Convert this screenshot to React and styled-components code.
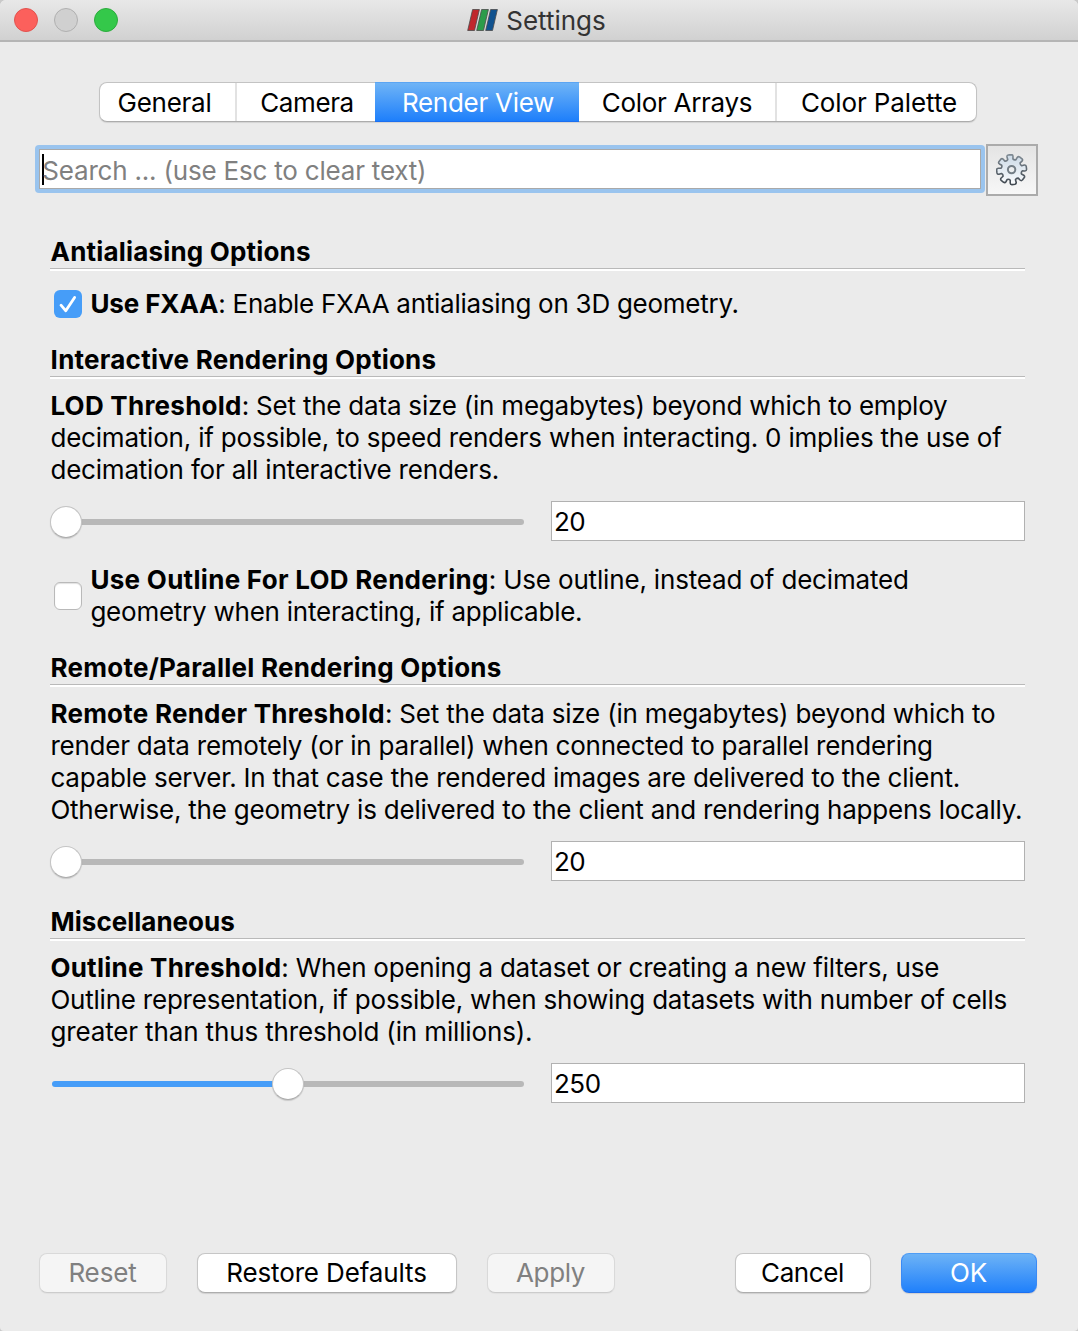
import React from "react";
import styled, { createGlobalStyle, css } from "styled-components";

const Global = createGlobalStyle`
  html, body { margin: 0; background: #c9c9c9; }
  * { box-sizing: border-box; }
`;

const Window = styled.div`
  width: 1078px;
  height: 1331px;
  display: flex;
  flex-direction: column;
  overflow: hidden;
  background: #ebebeb;
  border-radius: 6px 6px 4px 4px;
  color: #000;
  font: 400 26px/32px Inter, "Liberation Sans", sans-serif;
`;

const TitleBar = styled.header`
  flex: none;
  height: 42px;
  display: grid;
  grid-template-columns: 1fr auto 1fr;
  align-items: center;
  padding: 0 14px 2px;
  background: linear-gradient(#e8e8e8, #d1d1d1 40px);
  border-bottom: 2px solid #b5b5b5;
`;

const Lights = styled.div`
  display: flex;
  gap: 16px;
  padding-top: 2px;
`;

const Light = styled.span`
  width: 24px;
  height: 24px;
  border-radius: 50%;
  background: ${(p) => p.$fill};
  border: 1px solid ${(p) => p.$edge};
`;

const Title = styled.div`
  display: flex;
  align-items: center;
  gap: 8px;
  padding: 3px 5px 0 0;
  color: #333;
  white-space: nowrap;
`;

const Tracked = styled.span`
  letter-spacing: ${(p) => p.$track || 0}px;
  font-weight: ${(p) => (p.$bold ? 700 : 400)};
  white-space: pre;
`;

const Tabs = styled.nav`
  flex: none;
  display: flex;
  width: 878px;
  height: 40px;
  margin: 40px 0 0 99px;
  border: 1px solid #c3c3c3;
  border-bottom-color: #acacac;
  border-radius: 8px;
  background: #fff;
  box-shadow: 0 1px 1px rgba(0, 0, 0, 0.1);
`;

const Tab = styled.div`
  width: ${(p) => p.$width}px;
  display: flex;
  justify-content: center;
  line-height: 40px;
  border-right: ${(p) => (p.$divider ? "2px solid #e2e2e2" : "0")};
  padding: 0 ${(p) => p.$right || 0}px 0 ${(p) => p.$left || 0}px;
  ${(p) =>
    p.$active &&
    css`
      margin: -1px 0;
      color: #fff;
      background: linear-gradient(#6fb4f6, #1e7ffb);
      border-top: 1px solid #5ba5f3;
      border-bottom: 1px solid #1c6ff0;
    `}
`;

const SearchRow = styled.div`
  flex: none;
  display: flex;
  align-items: center;
  gap: 1px;
  height: 52px;
  margin: 22px 0 0 35px;
`;

const SearchBox = styled.div`
  width: 950px;
  height: 48px;
  margin-top: -2px;
  padding: 4px;
  border-radius: 4px;
  background: #9ac4ee;
`;

const SearchField = styled.div`
  display: flex;
  align-items: center;
  height: 40px;
  padding-left: 2px;
  border: 1px solid #a9a9a9;
  background: #fff;
  color: #808080;
`;

const Placeholder = styled.span`
  display: flex;
  padding-top: 4px;
  margin-left: -1.7px;
`;

const Caret = styled.span`
  width: 2px;
  height: 31px;
  background: #000;
`;

const GearButton = styled.div`
  width: 52px;
  height: 52px;
  display: flex;
  align-items: center;
  justify-content: center;
  border: 2px solid #ababab;
  background: linear-gradient(#e4e4e4, #f7f7f7);
`;

const Content = styled.main`
  flex: 1;
  display: flex;
  flex-direction: column;
  margin: 40px 53px 0 51px;
`;

const Heading = styled.h2`
  margin: 0 0 ${(p) => p.$after || 11}px -1px;
  padding-left: 0.6px;
  height: 35px;
  font-size: 26px;
  line-height: 32px;
  border-bottom: 2px solid #fff;
  box-shadow: inset 0 -1px 0 #b9b9b9;
`;

const Paragraph = styled.div`
  display: flex;
  flex-direction: column;
  margin-left: -0.6px;
`;

const Line = styled.div`
  height: 32px;
  white-space: nowrap;
`;

const CheckRow = styled.div`
  display: flex;
  align-items: center;
  gap: 9px;
  margin-bottom: 24px;
  padding-left: 3px;
`;

const Box = styled.span`
  width: 28px;
  height: 28px;
  flex: none;
  display: flex;
  align-items: center;
  justify-content: center;
  border-radius: 6px;
  border: ${(p) => (p.$on ? "0" : "1px solid #b9b9b9")};
  background: ${(p) => (p.$on ? "#469df8" : "#fff")};
  box-shadow: ${(p) => (p.$on ? "none" : "inset 0 1px 1px rgba(0,0,0,.12)")};
`;

const SliderRow = styled.div`
  display: grid;
  grid-template-columns: 474px 474px;
  column-gap: 26px;
  align-items: center;
  margin: 15px 0 ${(p) => p.$after}px;
`;

const Slider = styled.div`
  display: flex;
  align-items: center;
  height: 40px;
  padding: 2px 1px 0 0;
`;

const Track = styled.span`
  height: 6px;
  flex: ${(p) => (p.$fill ? "none" : 1)};
  width: ${(p) => (p.$fill ? p.$fill + "px" : "auto")};
  border-radius: ${(p) => (p.$fill ? "3px 0 0 3px" : "0 3px 3px 0")};
  margin-left: ${(p) => (p.$fill ? 1 : 0)}px;
  background: ${(p) => (p.$fill ? "#469df8" : "#b8b8b8")};
`;

const Knob = styled.span`
  width: 32px;
  height: 32px;
  flex: none;
  margin: 0 -1px;
  z-index: 1;
  border-radius: 50%;
  background: #fff;
  border: 1px solid #c4c4c4;
  border-bottom-color: #acacac;
  box-shadow: 0 1px 1px rgba(0, 0, 0, 0.15);
`;

const Value = styled.div`
  height: 40px;
  padding-left: 2px;
  line-height: 40px;
  border: 1px solid #b1b1b1;
  background: #fff;
`;

const Footer = styled.footer`
  flex: none;
  display: flex;
  gap: 30px;
  padding: 0 41px 38px 39px;
`;

const Button = styled.div`
  width: ${(p) => p.$width}px;
  height: 40px;
  display: flex;
  justify-content: center;
  line-height: 38px;
  padding-right: 1px;
  margin-left: ${(p) => (p.$push ? "auto" : 0)};
  border-radius: 8px;
  border: 1px solid #c6c6c6;
  border-bottom-color: #adadad;
  background: #fff;
  box-shadow: 0 1px 1px rgba(0, 0, 0, 0.12);
  ${(p) =>
    p.$disabled &&
    css`
      color: #808080;
      background: #f5f5f5;
      border-color: #d9d9d9;
      border-bottom-color: #cccccc;
      box-shadow: 0 1px 1px rgba(0, 0, 0, 0.04);
    `}
  ${(p) =>
    p.$primary &&
    css`
      color: #fff;
      background: linear-gradient(#6fb4f6, #1e7ffb) border-box;
      border-color: #4f9df5 #3a8af5 #1c6ff0;
    `}
`;

const T = ({ t, k = 0, b }) => (
  <Tracked $track={k} $bold={b}>
    {t}
  </Tracked>
);

const gearPath = (() => {
  const at = (deg, r) => {
    const t = (deg * Math.PI) / 180;
    return `${(15.6 + r * Math.cos(t)).toFixed(2)} ${(15.6 + r * Math.sin(t)).toFixed(2)}`;
  };
  let d = "";
  for (let i = 0; i < 8; i++) {
    const a = -97 + i * 45;
    d += `${i ? "L" : "M"}${at(a - 14, 10.8)}L${at(a - 13, 13.4)}Q${at(a - 12, 15)} ${at(a - 6, 15)}`;
    d += `L${at(a + 6, 15)}Q${at(a + 12, 15)} ${at(a + 13, 13.4)}L${at(a + 14, 10.8)}`;
    d += `Q${at(a + 22.5, 9.6)} ${at(a + 31, 10.8)}`;
  }
  return d + "Z";
})();

const Gear = () => (
  <svg width="32" height="32" viewBox="0 0 32 32">
    <defs>
      <linearGradient id="gear" x1="0" y1="0" x2="0" y2="1">
        <stop offset="0" stopColor="#cbd9e6" />
        <stop offset="1" stopColor="#fbfcfd" />
      </linearGradient>
      <linearGradient id="gearEdge" x1="0" y1="0" x2="0" y2="1">
        <stop offset="0" stopColor="#7f8a93" />
        <stop offset="1" stopColor="#3f474f" />
      </linearGradient>
    </defs>
    <path d={gearPath} fill="url(#gear)" stroke="url(#gearEdge)" strokeWidth="1.6" strokeLinejoin="round" />
    <circle cx="15.6" cy="15.6" r="3.7" fill="#eceeef" stroke="#747e86" strokeWidth="2" />
  </svg>
);

const Logo = () => (
  <svg width="31" height="24" viewBox="0 0 31 24">
    <g stroke="#4a4a4a" strokeWidth="0.8">
      <path d="M5.6 0.5h6.8L7.5 21.5H.7z" fill="#c0272d" />
      <path d="M14.6 0.5h6.8L16.5 21.5H9.7z" fill="#2c9c4a" />
      <path d="M23.6 0.5h6.8L25.5 21.5H18.7z" fill="#10528f" />
    </g>
  </svg>
);

const Para = ({ lines }) => (
  <Paragraph>
    {lines.map(([bold, bk, text, k]) => (
      <Line key={text}>
        {bold && <T t={bold} b k={bk} />}
        <T t={text} k={k} />
      </Line>
    ))}
  </Paragraph>
);

export default function App() {
  return (
    <>
      <Global />
      <Window>
        <TitleBar>
          <Lights>
            <Light $fill="#fc605c" $edge="#e2524e" />
            <Light $fill="#d0d0d0" $edge="#b0b0b0" />
            <Light $fill="#34c84a" $edge="#2bac3d" />
          </Lights>
          <Title>
            <Logo />
            <T t="Settings" />
          </Title>
        </TitleBar>
        <Tabs>
          <Tab $width={137} $divider $right={6}><T t="General" k={-0.28} /></Tab>
          <Tab $width={138} $left={2}><T t="Camera" k={-0.4} /></Tab>
          <Tab $width={204} $active $left={2}><T t="Render View" k={-0.28} /></Tab>
          <Tab $width={198} $divider><T t="Color Arrays" k={-0.3} /></Tab>
          <Tab $width={199} $left={5}><T t="Color Palette" k={-0.1} /></Tab>
        </Tabs>
        <SearchRow>
          <SearchBox>
            <SearchField>
              <Caret />
              <Placeholder><T t="Search ... (use Esc to clear text)" k={-0.2} /></Placeholder>
            </SearchField>
          </SearchBox>
          <GearButton><Gear /></GearButton>
        </SearchRow>
        <Content>
          <Heading $after={17}><T b t="Antialiasing Options" k={0.18} /></Heading>
          <CheckRow>
            <Box $on>
              <svg width="28" height="28" viewBox="0 0 28 28">
                <path d="M7 15.2l4.8 5.6L20.6 7.4" fill="none" stroke="#fff" strokeWidth="2.8" strokeLinecap="round" strokeLinejoin="round" />
              </svg>
            </Box>
            <Para lines={[["Use FXAA", -0.12, ": Enable FXAA antialiasing on 3D geometry.", -0.265]]} />
          </CheckRow>
          <Heading><T b t="Interactive Rendering Options" k={0.24} /></Heading>
          <Para
            lines={[
              ["LOD Threshold", 0.25, ": Set the data size (in megabytes) beyond which to employ", -0.214],
              ["", 0, "decimation, if possible, to speed renders when interacting. 0 implies the use of", -0.2],
              ["", 0, "decimation for all interactive renders.", -0.2],
            ]}
          />
          <SliderRow $after={23}>
            <Slider><Knob /><Track /></Slider>
            <Value><T t="20" k={-0.5} /></Value>
          </SliderRow>
          <CheckRow>
            <Box />
            <Para
              lines={[
                ["Use Outline For LOD Rendering", 0.29, ": Use outline, instead of decimated", -0.17],
                ["", 0, "geometry when interacting, if applicable.", -0.24],
              ]}
            />
          </CheckRow>
          <Heading><T b t="Remote/Parallel Rendering Options" k={0.24} /></Heading>
          <Para
            lines={[
              ["Remote Render Threshold", 0.24, ": Set the data size (in megabytes) beyond which to", -0.205],
              ["", 0, "render data remotely (or in parallel) when connected to parallel rendering", -0.23],
              ["", 0, "capable server. In that case the rendered images are delivered to the client.", -0.21],
              ["", 0, "Otherwise, the geometry is delivered to the client and rendering happens locally.", -0.212],
            ]}
          />
          <SliderRow $after={25}>
            <Slider><Knob /><Track /></Slider>
            <Value><T t="20" k={-0.6} /></Value>
          </SliderRow>
          <Heading><T b t="Miscellaneous" /></Heading>
          <Para
            lines={[
              ["Outline Threshold", 0.24, ": When opening a dataset or creating a new filters, use", -0.23],
              ["", 0, "Outline representation, if possible, when showing datasets with number of cells", -0.22],
              ["", 0, "greater than thus threshold (in millions).", -0.14],
            ]}
          />
          <SliderRow $after={0}>
            <Slider><Track $fill={221} /><Knob /><Track /></Slider>
            <Value><T t="250" k={-0.5} /></Value>
          </SliderRow>
        </Content>
        <Footer>
          <Button $width={128} $disabled><T t="Reset" k={-0.15} /></Button>
          <Button $width={260}><T t="Restore Defaults" k={-0.13} /></Button>
          <Button $width={128} $disabled><T t="Apply" k={-0.4} /></Button>
          <Button $width={136} $push><T t="Cancel" k={-0.4} /></Button>
          <Button $width={136} $primary><T t="OK" k={-0.2} /></Button>
        </Footer>
      </Window>
    </>
  );
}
